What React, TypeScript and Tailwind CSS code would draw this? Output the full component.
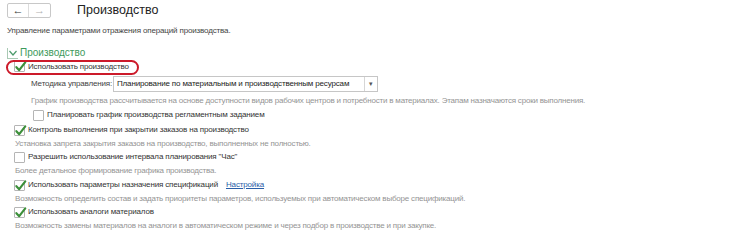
import React from 'react';

const font = { fontFamily: '"Liberation Sans", Arial, sans-serif' };

function CheckBox({ checked }: { checked?: boolean }) {
  return (
    <span className="relative inline-flex w-[11px] h-[11px] border border-[#b5b5b5] bg-white rounded-[1px] shrink-0">
      {checked && (
        <svg viewBox="0 0 12 12" className="absolute -left-[1px] -top-[2px] w-[13px] h-[13px]">
          <path d="M2.2 6.6 L4.8 9.4 L10.4 2.2" fill="none" stroke="#3c8f3a" strokeWidth="2" strokeLinecap="round" strokeLinejoin="round" />
        </svg>
      )}
    </span>
  );
}

function CheckRow({
  checked,
  label,
  indent = 'pl-[14px]',
  h = 'h-[14px]',
  children,
}: {
  checked?: boolean;
  label: string;
  indent?: string;
  h?: string;
  children?: React.ReactNode;
}) {
  return (
    <div className={`flex items-center gap-[3px] ${indent} ${h}`}>
      <CheckBox checked={checked} />
      <span className="text-[8px] tracking-[-0.15px] text-[#333] leading-none whitespace-nowrap">{label}</span>
      {children}
    </div>
  );
}

function Hint({ text, indent = 'pl-[15px]', h = 'h-[14px]' }: { text: string; indent?: string; h?: string }) {
  return (
    <div className={`flex items-center ${indent} ${h} text-[8px] tracking-[-0.2px] text-[#949494] leading-none whitespace-nowrap`}>
      {text}
    </div>
  );
}

export default function App() {
  return (
    <div className="relative w-[750px] h-[240px] bg-white overflow-hidden" style={font}>
      {/* Header */}
      <div className="flex items-center h-[20px] pl-[7px]">
        <div className="flex h-[15px] border border-[#c8c8c8] rounded-[2px] bg-white">
          <button className="w-[21px] h-full flex items-center justify-center text-[11px] text-[#333] border-r border-[#dcdcdc] leading-none">
            ←
          </button>
          <button className="w-[21px] h-full flex items-center justify-center text-[11px] text-[#b0b0b0] leading-none">
            →
          </button>
        </div>
        <div className="ml-[26px] text-[12.5px] text-[#222] leading-none">Производство</div>
      </div>

      {/* Subtitle */}
      <div className="flex items-center h-[22px] pl-[7px] text-[8px] tracking-[-0.15px] text-[#444] leading-none">
        Управление параметрами отражения операций производства.
      </div>

      <div className="h-[4px]" />

      {/* Group header */}
      <div className="flex items-center h-[14px] pl-[7px] gap-[2px]">
        <span className="inline-flex items-center justify-center w-[11px] h-[11px] border-l border-b border-[#a9c9b4]">
          <svg viewBox="0 0 10 10" className="w-[10px] h-[10px]">
            <path d="M1.5 3 L5 7 L8.5 3" fill="none" stroke="#4b9a6b" strokeWidth="1.2" />
          </svg>
        </span>
        <span className="text-[10px] text-[#3d9a5c] leading-none">Производство</span>
      </div>

      {/* Use production */}
      <CheckRow checked label="Использовать производство" h="h-[13px]" />

      <div className="h-[2px]" />

      {/* Methodology */}
      <div className="flex items-center h-[18px] pl-[31px]">
        <span className="w-[82px] shrink-0 text-[8px] tracking-[-0.15px] text-[#444] leading-none whitespace-nowrap">
          Методика управления:
        </span>
        <div className="flex items-center w-[265px] h-[16px] border border-[#c6c6c6] bg-white">
          <span className="flex-1 pl-[3px] text-[8px] tracking-[-0.15px] text-[#222] leading-none whitespace-nowrap">
            Планирование по материальным и производственным ресурсам
          </span>
          <span className="w-[13px] h-full flex items-center justify-center border-l border-[#d6d6d6] text-[7px] text-[#555]">
            ▾
          </span>
        </div>
      </div>

      <Hint
        indent="pl-[31px]"
        h="h-[15px]"
        text="График производства рассчитывается на основе доступности видов рабочих центров и потребности в материалах. Этапам назначаются сроки выполнения."
      />

      <CheckRow indent="pl-[33px]" label="Планировать график производства регламентным заданием" />

      <div className="h-[1px]" />

      <CheckRow checked label="Контроль выполнения при закрытии заказов на производство" />
      <Hint h="h-[13px]" text="Установка запрета закрытия заказов на производство, выполненных не полностью." />

      <CheckRow label='Разрешить использование интервала планирования "Час"' />
      <Hint text="Более детальное формирование графика производства." />

      <CheckRow checked label="Использовать параметры назначения спецификаций">
        <a className="ml-[5px] text-[8px] tracking-[-0.15px] text-[#2a5ea8] underline leading-none">Настройка</a>
      </CheckRow>
      <Hint
        h="h-[13px]"
        text="Возможность определить состав и задать приоритеты параметров, используемых при автоматическом выборе спецификаций."
      />

      <CheckRow checked label="Использовать аналоги материалов" />
      <Hint text="Возможность замены материалов на аналоги в автоматическом режиме и через подбор в производстве и при закупке." />

      {/* Red annotation oval */}
      <div className="absolute left-[6px] top-[60px] w-[133px] h-[15px] border-2 border-[#cc1a2a] rounded-full pointer-events-none" />
    </div>
  );
}
